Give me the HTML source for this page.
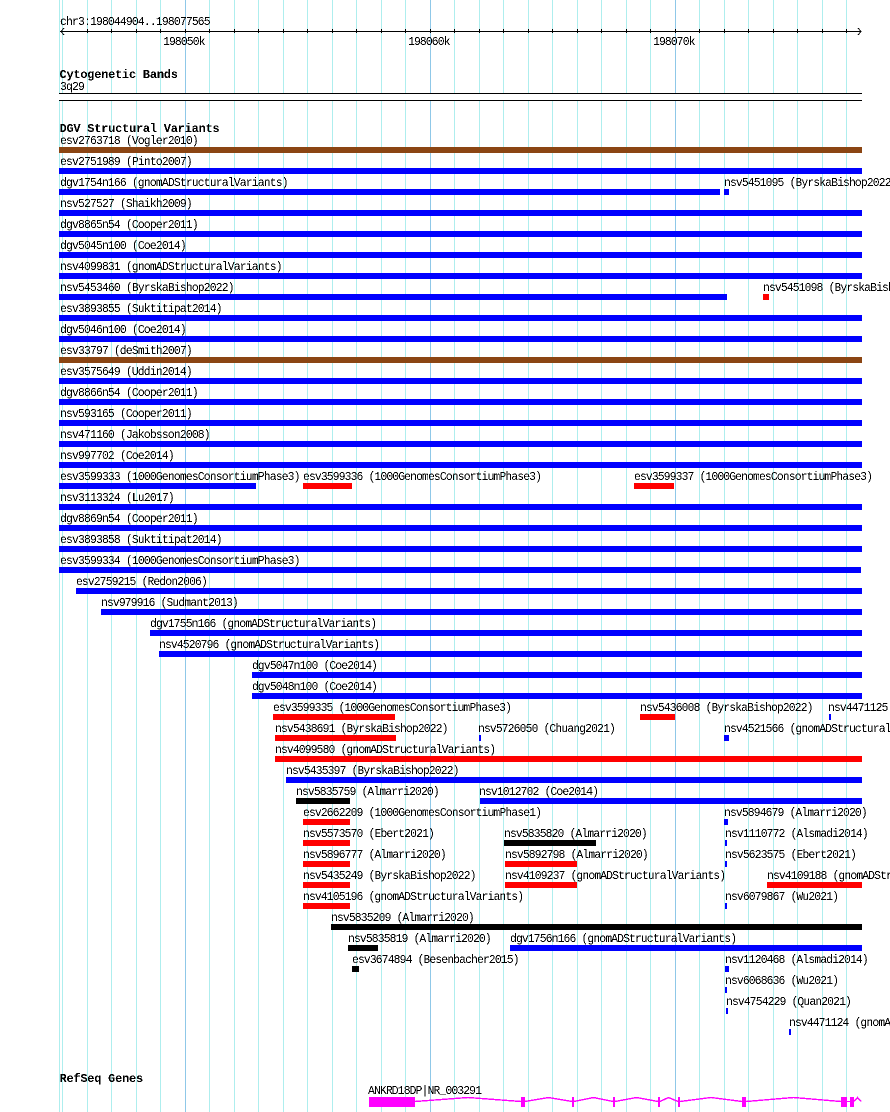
<!DOCTYPE html>
<html><head><meta charset="utf-8"><title>JBrowse</title>
<style>
html,body{margin:0;padding:0;background:#fff;width:890px;height:1112px;overflow:hidden}
svg{display:block;position:absolute;left:0;top:0}
text{font-family:"Liberation Mono","DejaVu Sans Mono",monospace;font-size:12px;letter-spacing:-0.884px;fill:#000;white-space:pre;transform-box:fill-box;transform-origin:0 0;transform:scaleX(.95)}
text:not([x="60"]){letter-spacing:-0.926px}
text.t{font-weight:bold;font-size:12px;letter-spacing:-0.25px;transform:none}
.g rect{fill:#aeeeee}
.d rect{fill:#8fc8e8}
.bl rect{fill:#0000ff}
.re rect{fill:#ff0000}
.bk rect{fill:#000}
.br rect{fill:#8b4513}
.m rect{fill:#ff00ff}
</style></head><body>
<svg width="890" height="1112" viewBox="0 0 890 1112" shape-rendering="crispEdges">
<defs><filter id="a" x="0" y="0" width="890" height="1112" filterUnits="userSpaceOnUse" color-interpolation-filters="sRGB"><feComponentTransfer><feFuncA type="discrete" tableValues="0 1"/></feComponentTransfer></filter></defs>
<g class="g">
<rect x="59" y="0" width="1" height="1112"/><rect x="62" y="0" width="1" height="1112"/><rect x="87" y="0" width="1" height="1112"/><rect x="111" y="0" width="1" height="1112"/><rect x="136" y="0" width="1" height="1112"/><rect x="160" y="0" width="1" height="1112"/><rect x="209" y="0" width="1" height="1112"/><rect x="234" y="0" width="1" height="1112"/><rect x="258" y="0" width="1" height="1112"/><rect x="283" y="0" width="1" height="1112"/><rect x="307" y="0" width="1" height="1112"/><rect x="332" y="0" width="1" height="1112"/><rect x="356" y="0" width="1" height="1112"/><rect x="381" y="0" width="1" height="1112"/><rect x="405" y="0" width="1" height="1112"/><rect x="454" y="0" width="1" height="1112"/><rect x="479" y="0" width="1" height="1112"/><rect x="503" y="0" width="1" height="1112"/><rect x="528" y="0" width="1" height="1112"/><rect x="552" y="0" width="1" height="1112"/><rect x="577" y="0" width="1" height="1112"/><rect x="601" y="0" width="1" height="1112"/><rect x="626" y="0" width="1" height="1112"/><rect x="650" y="0" width="1" height="1112"/><rect x="699" y="0" width="1" height="1112"/><rect x="724" y="0" width="1" height="1112"/><rect x="748" y="0" width="1" height="1112"/><rect x="773" y="0" width="1" height="1112"/><rect x="797" y="0" width="1" height="1112"/><rect x="822" y="0" width="1" height="1112"/><rect x="846" y="0" width="1" height="1112"/>
</g>
<g class="d"><rect x="185" y="0" width="1" height="1112"/><rect x="430" y="0" width="1" height="1112"/><rect x="675" y="0" width="1" height="1112"/></g>
<rect x="59" y="94" width="803" height="6" fill="#fff"/>

<!-- axis -->
<g class="bk">
<rect x="60" y="31" width="801" height="1"/>
<rect x="87" y="29" width="1" height="4"/><rect x="111" y="29" width="1" height="4"/><rect x="136" y="29" width="1" height="4"/><rect x="160" y="29" width="1" height="4"/><rect x="185" y="29" width="1" height="4"/><rect x="209" y="29" width="1" height="4"/><rect x="234" y="29" width="1" height="4"/><rect x="258" y="29" width="1" height="4"/><rect x="283" y="29" width="1" height="4"/><rect x="307" y="29" width="1" height="4"/><rect x="332" y="29" width="1" height="4"/><rect x="356" y="29" width="1" height="4"/><rect x="381" y="29" width="1" height="4"/><rect x="405" y="29" width="1" height="4"/><rect x="430" y="29" width="1" height="4"/><rect x="454" y="29" width="1" height="4"/><rect x="479" y="29" width="1" height="4"/><rect x="503" y="29" width="1" height="4"/><rect x="528" y="29" width="1" height="4"/><rect x="552" y="29" width="1" height="4"/><rect x="577" y="29" width="1" height="4"/><rect x="601" y="29" width="1" height="4"/><rect x="626" y="29" width="1" height="4"/><rect x="650" y="29" width="1" height="4"/><rect x="675" y="29" width="1" height="4"/><rect x="699" y="29" width="1" height="4"/><rect x="724" y="29" width="1" height="4"/><rect x="748" y="29" width="1" height="4"/><rect x="773" y="29" width="1" height="4"/><rect x="797" y="29" width="1" height="4"/><rect x="822" y="29" width="1" height="4"/><rect x="846" y="29" width="1" height="4"/>
<rect x="59" y="93" width="803" height="1"/><rect x="59" y="100" width="803" height="1"/>
</g>
<path d="M64 28L61 31.5L64 35M858 28L861 31.5L858 35" fill="none" stroke="#000" stroke-width="1"/>

<!-- bars -->
<g class="br"><rect x="59" y="147" width="803" height="6"/><rect x="59" y="357" width="803" height="6"/></g>
<g class="bl">
<rect x="59" y="168" width="803" height="6"/>
<rect x="59" y="189" width="661" height="6"/><rect x="724" y="189" width="5" height="6"/>
<rect x="59" y="210" width="803" height="6"/>
<rect x="59" y="231" width="803" height="6"/>
<rect x="59" y="252" width="803" height="6"/>
<rect x="59" y="273" width="803" height="6"/>
<rect x="59" y="294" width="668" height="6"/>
<rect x="59" y="315" width="803" height="6"/>
<rect x="59" y="336" width="803" height="6"/>
<rect x="59" y="378" width="803" height="6"/>
<rect x="59" y="399" width="803" height="6"/>
<rect x="59" y="420" width="803" height="6"/>
<rect x="59" y="441" width="803" height="6"/>
<rect x="59" y="462" width="803" height="6"/>
<rect x="59" y="483" width="197" height="6"/>
<rect x="59" y="504" width="803" height="6"/>
<rect x="59" y="525" width="803" height="6"/>
<rect x="59" y="546" width="803" height="6"/>
<rect x="59" y="567" width="802" height="6"/>
<rect x="76" y="588" width="786" height="6"/>
<rect x="101" y="609" width="761" height="6"/>
<rect x="150" y="630" width="712" height="6"/>
<rect x="159" y="651" width="703" height="6"/>
<rect x="252" y="672" width="610" height="6"/>
<rect x="252" y="693" width="610" height="6"/>
<rect x="829" y="714" width="2" height="6"/>
<rect x="479" y="735" width="2" height="6"/><rect x="724" y="735" width="5" height="6"/>
<rect x="286" y="777" width="576" height="6"/>
<rect x="480" y="798" width="382" height="6"/>
<rect x="724" y="819" width="4" height="6"/>
<rect x="725" y="840" width="2" height="6"/>
<rect x="725" y="861" width="2" height="6"/>
<rect x="725" y="903" width="2" height="6"/>
<rect x="510" y="945" width="352" height="6"/>
<rect x="725" y="966" width="4" height="6"/>
<rect x="725" y="987" width="2" height="6"/>
<rect x="726" y="1008" width="2" height="6"/>
<rect x="789" y="1029" width="2" height="6"/>
</g>
<g class="re">
<rect x="763" y="294" width="6" height="6"/>
<rect x="303" y="483" width="49" height="6"/><rect x="634" y="483" width="40" height="6"/>
<rect x="273" y="714" width="122" height="6"/><rect x="640" y="714" width="35" height="6"/>
<rect x="275" y="735" width="121" height="6"/>
<rect x="275" y="756" width="587" height="6"/>
<rect x="303" y="819" width="47" height="6"/>
<rect x="303" y="840" width="47" height="6"/>
<rect x="303" y="861" width="47" height="6"/><rect x="505" y="861" width="72" height="6"/>
<rect x="303" y="882" width="47" height="6"/><rect x="505" y="882" width="72" height="6"/><rect x="767" y="882" width="95" height="6"/>
<rect x="303" y="903" width="47" height="6"/>
</g>
<g class="bk">
<rect x="296" y="798" width="54" height="6"/>
<rect x="504" y="840" width="92" height="6"/>
<rect x="331" y="924" width="531" height="6"/>
<rect x="348" y="945" width="30" height="6"/>
<rect x="352" y="966" width="7" height="6"/>
</g>

<!-- labels -->
<g filter="url(#a)">
<text x="60" y="25">chr3:198044904..198077565</text>
<text x="163" y="45">198050k</text><text x="408" y="45">198060k</text><text x="653" y="45">198070k</text>
<text class="t" x="59.5" y="78">Cytogenetic Bands</text>
<text x="60" y="90">3q29</text>
<text class="t" x="59.5" y="132">DGV Structural Variants</text>
<text x="60" y="144">esv2763718 (Vogler2010)</text>
<text x="60" y="165">esv2751989 (Pinto2007)</text>
<text x="60" y="186">dgv1754n166 (gnomADStructuralVariants)</text><text x="724" y="186">nsv5451095 (ByrskaBishop2022)</text>
<text x="60" y="207">nsv527527 (Shaikh2009)</text>
<text x="60" y="228">dgv8865n54 (Cooper2011)</text>
<text x="60" y="249">dgv5045n100 (Coe2014)</text>
<text x="60" y="270">nsv4099831 (gnomADStructuralVariants)</text>
<text x="60" y="291">nsv5453460 (ByrskaBishop2022)</text><text x="763" y="291">nsv5451098 (ByrskaBishop2022)</text>
<text x="60" y="312">esv3893855 (Suktitipat2014)</text>
<text x="60" y="333">dgv5046n100 (Coe2014)</text>
<text x="60" y="354">esv33797 (deSmith2007)</text>
<text x="60" y="375">esv3575649 (Uddin2014)</text>
<text x="60" y="396">dgv8866n54 (Cooper2011)</text>
<text x="60" y="417">nsv593165 (Cooper2011)</text>
<text x="60" y="438">nsv471160 (Jakobsson2008)</text>
<text x="60" y="459">nsv997702 (Coe2014)</text>
<text x="60" y="480">esv3599333 (1000GenomesConsortiumPhase3)</text><text x="303" y="480">esv3599336 (1000GenomesConsortiumPhase3)</text><text x="634" y="480">esv3599337 (1000GenomesConsortiumPhase3)</text>
<text x="60" y="501">nsv3113324 (Lu2017)</text>
<text x="60" y="522">dgv8869n54 (Cooper2011)</text>
<text x="60" y="543">esv3893858 (Suktitipat2014)</text>
<text x="60" y="564">esv3599334 (1000GenomesConsortiumPhase3)</text>
<text x="76" y="585">esv2759215 (Redon2006)</text>
<text x="101" y="606">nsv979916 (Sudmant2013)</text>
<text x="150" y="627">dgv1755n166 (gnomADStructuralVariants)</text>
<text x="159" y="648">nsv4520796 (gnomADStructuralVariants)</text>
<text x="252" y="669">dgv5047n100 (Coe2014)</text>
<text x="252" y="690">dgv5048n100 (Coe2014)</text>
<text x="273" y="711">esv3599335 (1000GenomesConsortiumPhase3)</text><text x="640" y="711">nsv5436008 (ByrskaBishop2022)</text><text x="828" y="711">nsv4471125 (gnomADStructuralVariants)</text>
<text x="275" y="732">nsv5438691 (ByrskaBishop2022)</text><text x="478" y="732">nsv5726050 (Chuang2021)</text><text x="724" y="732">nsv4521566 (gnomADStructuralVariants)</text>
<text x="275" y="753">nsv4099580 (gnomADStructuralVariants)</text>
<text x="286" y="774">nsv5435397 (ByrskaBishop2022)</text>
<text x="296" y="795">nsv5835759 (Almarri2020)</text><text x="479" y="795">nsv1012702 (Coe2014)</text>
<text x="303" y="816">esv2662209 (1000GenomesConsortiumPhase1)</text><text x="724" y="816">nsv5894679 (Almarri2020)</text>
<text x="303" y="837">nsv5573570 (Ebert2021)</text><text x="504" y="837">nsv5835820 (Almarri2020)</text><text x="725" y="837">nsv1110772 (Alsmadi2014)</text>
<text x="303" y="858">nsv5896777 (Almarri2020)</text><text x="505" y="858">nsv5892798 (Almarri2020)</text><text x="725" y="858">nsv5623575 (Ebert2021)</text>
<text x="303" y="879">nsv5435249 (ByrskaBishop2022)</text><text x="505" y="879">nsv4109237 (gnomADStructuralVariants)</text><text x="767" y="879">nsv4109188 (gnomADStructuralVariants)</text>
<text x="303" y="900">nsv4105196 (gnomADStructuralVariants)</text><text x="725" y="900">nsv6079867 (Wu2021)</text>
<text x="331" y="921">nsv5835209 (Almarri2020)</text>
<text x="348" y="942">nsv5835819 (Almarri2020)</text><text x="510" y="942">dgv1756n166 (gnomADStructuralVariants)</text>
<text x="352" y="963">esv3674894 (Besenbacher2015)</text><text x="725" y="963">nsv1120468 (Alsmadi2014)</text>
<text x="725" y="984">nsv6068636 (Wu2021)</text>
<text x="726" y="1005">nsv4754229 (Quan2021)</text>
<text x="789" y="1026">nsv4471124 (gnomADStructuralVariants)</text>
<text class="t" x="59.5" y="1082">RefSeq Genes</text>
<text x="368" y="1094">ANKRD18DP|NR_003291</text>
</g>

<!-- gene -->
<g class="m">
<rect x="369" y="1097" width="46" height="10"/>
<rect x="521" y="1097" width="4" height="10"/>
<rect x="572" y="1097" width="2" height="10"/>
<rect x="613" y="1097" width="2" height="10"/>
<rect x="658" y="1097" width="2" height="10"/>
<rect x="678" y="1097" width="2" height="10"/>
<rect x="742" y="1097" width="4" height="10"/>
<rect x="841" y="1097" width="6" height="10"/>
<rect x="850" y="1097" width="4" height="10"/>
</g>
<g fill="none" stroke="#ff00ff" stroke-width="1.4">
<polyline points="415,1101.5 468,1097.5 521,1101.5"/>
<polyline points="525,1101.5 548.5,1097.5 572,1101.5"/>
<polyline points="574,1101.5 593.5,1097.5 613,1101.5"/>
<polyline points="615,1101.5 636.5,1097.5 658,1101.5"/>
<polyline points="660,1101.5 668.5,1097.5 678,1101.5"/>
<polyline points="680,1101.5 711,1097.5 742,1101.5"/>
<polyline points="746,1101.5 793.5,1097.5 841,1101.5"/>
<polyline points="847,1101.5 850,1101.5"/>
<polyline points="854,1101.5 857.5,1097.5 861,1101.5"/>
</g>
</svg>
</body></html>
